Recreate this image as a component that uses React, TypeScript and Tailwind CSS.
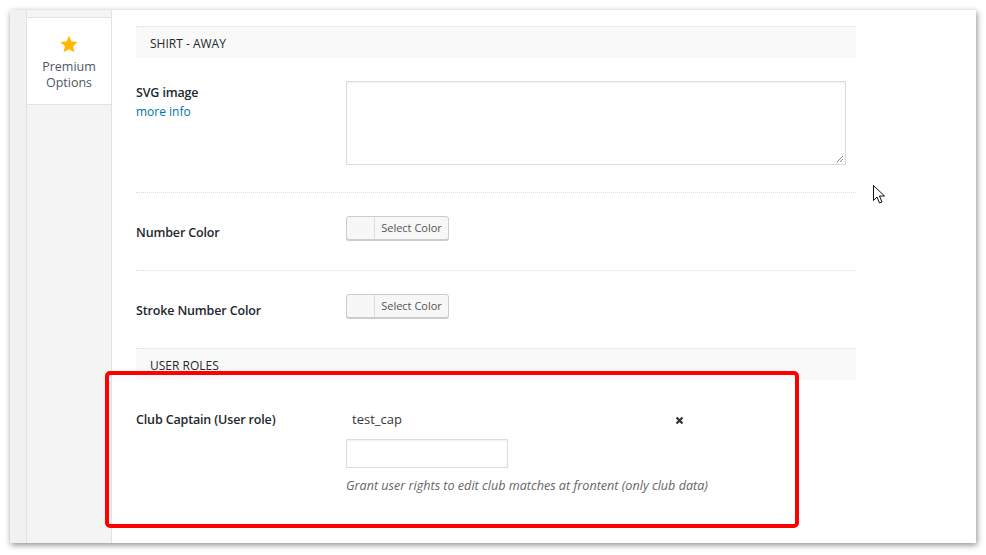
const font = { fontFamily: '"Open Sans", "Segoe UI", sans-serif' };

const labelCls = 'text-[12.5px] font-semibold tracking-[-0.15px] text-[#23282d] leading-[20px]';

function SectionHeader({ title }: { title: string }) {
  return (
    <div className="h-[32px] bg-[#f9f9f9] border-t border-dotted border-[#dcdcdc] flex items-center pl-[14px] pt-[2px] text-[12px] uppercase text-[#23282d]">
      {title}
    </div>
  );
}

function ColorButton() {
  return (
    <div className="flex h-[24px] w-[103px] rounded-[3px] border border-[#cccccc] bg-[#f7f7f7] shadow-[0_1px_0_#cccccc] overflow-hidden">
      <div className="w-[28px] border-r border-[#dddddd]" />
      <div className="flex-1 flex items-center justify-center text-[11px] text-[#555]">Select Color</div>
    </div>
  );
}

function ColorRow({ label }: { label: string }) {
  return (
    <div className="flex h-[78px] border-t border-dotted border-[#dcdcdc]">
      <div className={`w-[210px] pt-[30px] ${labelCls}`}>{label}</div>
      <div className="pt-[23px]">
        <ColorButton />
      </div>
    </div>
  );
}

export default function App() {
  return (
    <div className="relative w-[986px] h-[555px] bg-white overflow-hidden" style={font}>
      <div className="absolute left-[10px] top-[10px] w-[966px] h-[533px] bg-white shadow-[1px_2px_6px_rgba(0,0,0,0.45)] flex">
        {/* left strip */}
        <div className="w-[17px] bg-[#f1f1f1] border-r border-[#e2e2e2]" />
        {/* tabs */}
        <div className="w-[85px] bg-[#f4f4f4] border-r border-[#e2e2e2] flex flex-col">
          <div className="h-[8px] border-b border-[#e2e2e2]" />
          <div className="h-[87px] bg-white border-b border-[#e2e2e2] flex flex-col items-center pt-[17px]">
            <svg width="20" height="19" viewBox="0 0 24 23">
              <path d="M12 1 L15.1 8 L22.6 8.6 L16.9 13.6 L18.6 21 L12 17.1 L5.4 21 L7.1 13.6 L1.4 8.6 L8.9 8 Z" fill="#ffb900" />
            </svg>
            <div className="mt-[5px] text-[12.5px] leading-[16px] text-[#50575e] text-center">
              Premium<br />Options
            </div>
          </div>
        </div>
        {/* content */}
        <div className="flex-1 pl-[24px] pt-[16px]">
          <div className="w-[720px]">
            <SectionHeader title="Shirt - Away" />
            <div className="flex pt-[23px] pb-[27px]">
              <div className="w-[210px] pt-[2px]">
                <div className={labelCls}>SVG image</div>
                <div className="text-[12px] text-[#0073aa] leading-[18px]">more info</div>
              </div>
              <div className="relative w-[500px] h-[84px] border border-[#dddddd] shadow-[inset_0_1px_2px_rgba(0,0,0,0.07)]">
                <svg className="absolute right-[1px] bottom-[1px]" width="8" height="8" viewBox="0 0 8 8">
                  <path d="M7 1 L1 7 M7 4 L4 7" stroke="#888" strokeWidth="1" />
                </svg>
              </div>
            </div>
            <ColorRow label="Number Color" />
            <ColorRow label="Stroke Number Color" />
            <SectionHeader title="User Roles" />
            <div className="flex pt-[30px]">
              <div className={`w-[210px] ${labelCls}`}>Club Captain (User role)</div>
              <div className="flex flex-col">
                <div className="flex items-center w-[340px] h-[20px] pl-[6px] text-[13px] text-[#32373c]">
                  <span className="flex-1">test_cap</span>
                  <svg className="mr-[2px]" width="9" height="9" viewBox="0 0 9 9">
                    <path d="M1.5 1.5 L7.5 7.5 M7.5 1.5 L1.5 7.5" stroke="#333" strokeWidth="2.2" />
                  </svg>
                </div>
                <div className="mt-[9px] w-[162px] h-[29px] border border-[#dddddd] shadow-[inset_0_1px_2px_rgba(0,0,0,0.07)]" />
                <div className="mt-[9px] text-[12.6px] italic text-[#666] leading-[18px]">
                  Grant user rights to edit club matches at frontent (only club data)
                </div>
              </div>
            </div>
          </div>
        </div>
      </div>
      {/* annotation */}
      <div className="absolute left-[105px] top-[371px] w-[694px] h-[157px] border-[4px] border-[#ff0000] rounded-[5px]" />
      {/* cursor */}
      <svg className="absolute left-[873px] top-[185px]" width="14" height="20" viewBox="0 0 14 20">
        <path d="M0.5 0.5 L0.5 15.5 L4 12 L6.5 18 L9 17 L6.5 11 L11.5 11 Z" fill="white" stroke="#111" strokeWidth="1" />
      </svg>
    </div>
  );
}
